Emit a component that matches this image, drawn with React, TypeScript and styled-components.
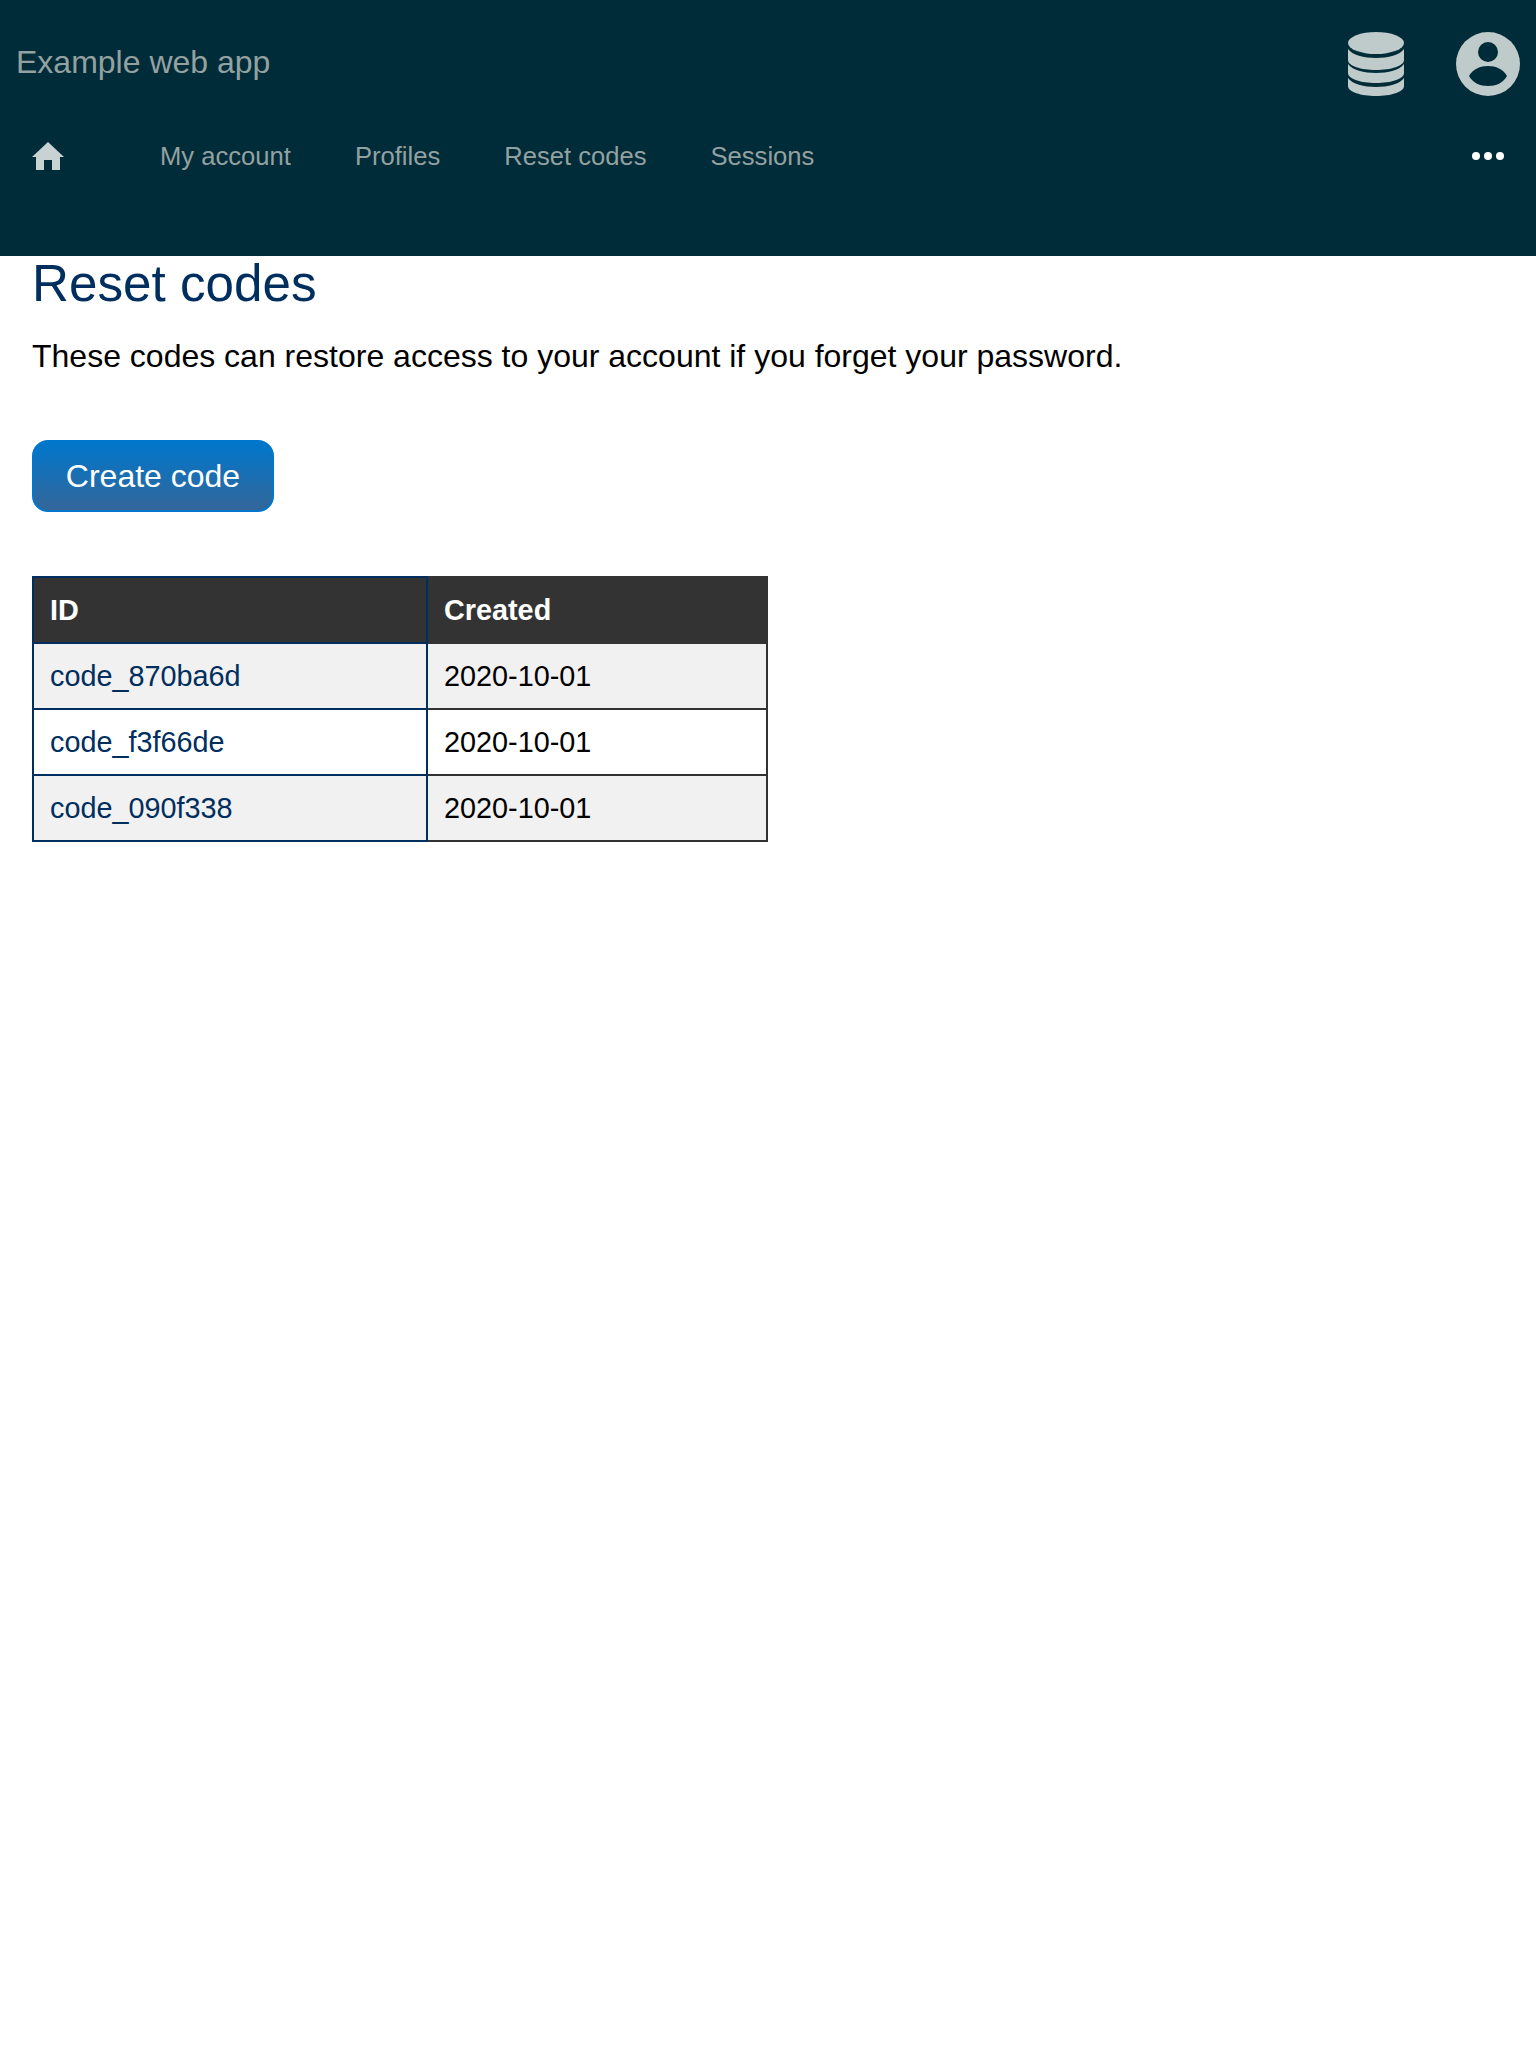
import React from "react";
import styled, { createGlobalStyle } from "styled-components";

const Global = createGlobalStyle`
  html, body { margin: 0; padding: 0; background: #fff; }
  body { font-family: "Liberation Sans", Arial, sans-serif; color: #000; }
`;

const Header = styled.header`
  background: #002b38;
  height: 256px;
  display: flex;
  flex-direction: column;
`;
const TopBar = styled.div`
  height: 128px;
  display: flex;
  align-items: center;
  padding: 0 16px;
`;
const Brand = styled.div`
  font-size: 32px;
  color: #93a1a1;
  flex: 1;
  margin-top: -4px;
`;
const TopIcons = styled.div`
  display: flex;
  align-items: center;
  gap: 52px;
  margin-top: -1px;
`;
const Nav = styled.nav`
  display: flex;
  align-items: center;
  height: 64px;
  margin-top: -4px;
  padding: 0 32px;
  font-size: 25.6px;
  color: #93a1a1;
`;
const HomeLink = styled.a`
  display: flex;
  width: 128px;
`;
const NavLink = styled.a`
  margin-right: 64px;
`;
const More = styled.div`
  margin-left: auto;
  display: flex;
`;
const Main = styled.main`
  padding: 0 32px;
`;
const Title = styled.h1`
  margin: 0;
  font-size: 51.2px;
  font-weight: 400;
  line-height: 56px;
  color: #002e5f;
`;
const Intro = styled.p`
  margin: 26px 0 0;
  font-size: 32px;
  line-height: 37px;
`;
const Button = styled.button`
  display: block;
  margin-top: 65px;
  width: 242px;
  height: 72px;
  padding: 0;
  border: 2px solid #0077cc;
  border-radius: 16px;
  background: linear-gradient(#0077cc, #336699);
  color: #fff;
  font-family: inherit;
  font-size: 32px;
`;
const Table = styled.table`
  margin-top: 64px;
  border-collapse: collapse;
  font-size: 28.8px;
  table-layout: fixed;
  width: 736px;
`;
const Head = styled.th<{ $first?: boolean }>`
  background: #333;
  color: #fff;
  text-align: left;
  font-weight: 700;
  height: 64px;
  padding: 0 16px;
  box-sizing: content-box;
  border: 2px solid ${(p) => (p.$first ? "#002e5f" : "#333")};
  width: ${(p) => (p.$first ? "360px" : "auto")};
`;
const Row = styled.tr<{ $shade: boolean }>`
  background: ${(p) => (p.$shade ? "#f1f1f1" : "#fff")};
`;
const IdCell = styled.td`
  height: 64px;
  padding: 0 16px;
  border: 2px solid #002e5f;
`;
const DateCell = styled.td`
  height: 64px;
  padding: 0 16px;
  border: 2px solid #333;
`;
const CodeLink = styled.a`
  color: #002e5f;
`;

const rows = ["code_870ba6d", "code_f3f66de", "code_090f338"];

export default function App() {
  return (
    <>
      <Global />
      <Header>
        <TopBar>
          <Brand>Example web app</Brand>
          <TopIcons>
            <svg width="56" height="64" viewBox="0 0 56 64" fill="#bfcaca">
              <ellipse cx="28" cy="11" rx="28" ry="11" />
              <path d="M0 17c4 6 16 9 28 9s24-3 28-9v11c0 6-13 10-28 10S0 34 0 28z" />
              <path d="M0 32c4 6 16 9 28 9s24-3 28-9v9c0 6-13 10-28 10S0 47 0 41z" />
              <path d="M0 46c4 6 16 9 28 9s24-3 28-9v8c0 6-13 10-28 10S0 60 0 54z" />
            </svg>
            <svg width="64" height="64" viewBox="0 0 64 64">
              <circle cx="32" cy="32" r="32" fill="#bfcaca" />
              <circle cx="32" cy="20" r="10" fill="#002b38" />
              <ellipse cx="32" cy="55" rx="0" ry="0" fill="#002b38" />
              <path d="M13 44c4-7 11-10 19-10s15 3 19 10c-4 7-11 10-19 10s-15-3-19-10z" fill="#002b38" />
            </svg>
          </TopIcons>
        </TopBar>
        <Nav>
          <HomeLink>
            <svg width="32" height="28" viewBox="0 0 32 28" fill="#c9d2d3">
              <path d="M16 0 32 15h-4v13h-8V18h-8v10H4V15H0z" />
            </svg>
          </HomeLink>
          <NavLink>My account</NavLink>
          <NavLink>Profiles</NavLink>
          <NavLink>Reset codes</NavLink>
          <NavLink>Sessions</NavLink>
          <More>
            <svg width="32" height="8" viewBox="0 0 32 8" fill="#fff">
              <circle cx="4" cy="4" r="4" />
              <circle cx="16" cy="4" r="4" />
              <circle cx="28" cy="4" r="4" />
            </svg>
          </More>
        </Nav>
      </Header>
      <Main>
        <Title>Reset codes</Title>
        <Intro>These codes can restore access to your account if you forget your password.</Intro>
        <Button>Create code</Button>
        <Table>
          <thead>
            <tr>
              <Head $first>ID</Head>
              <Head>Created</Head>
            </tr>
          </thead>
          <tbody>
            {rows.map((id, i) => (
              <Row key={id} $shade={i % 2 === 0}>
                <IdCell>
                  <CodeLink>{id}</CodeLink>
                </IdCell>
                <DateCell>2020-10-01</DateCell>
              </Row>
            ))}
          </tbody>
        </Table>
      </Main>
    </>
  );
}
